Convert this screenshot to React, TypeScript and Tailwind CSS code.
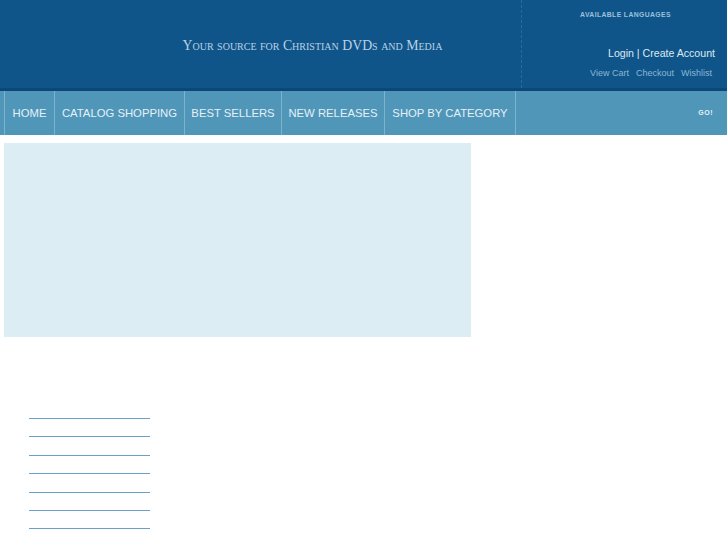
import React from "react";

export default function App() {
  const navItems = [
    { label: "HOME", w: "w-[50px]" },
    { label: "CATALOG SHOPPING", w: "w-[130px]" },
    { label: "BEST SELLERS", w: "w-[97px]" },
    { label: "NEW RELEASES", w: "w-[103px]" },
    { label: "SHOP BY CATEGORY", w: "w-[131px]" },
  ];
  return (
    <div className="w-[727px] min-h-[545px] bg-white" style={{ fontFamily: '"Liberation Sans", Arial, sans-serif' }}>
      <div className="h-[88px] bg-[#105589] flex">
        <div className="w-[521px] flex items-center justify-center pt-[4px] pl-[104px]">
          <span
            className="text-[#b8d2e6] text-[13.8px]"
            style={{ fontFamily: '"Liberation Serif", "Times New Roman", serif', fontVariant: "small-caps" }}
          >
            Your source for Christian DVDs and Media
          </span>
        </div>
        <div className="flex-1 border-l border-dashed border-[#2a6a9c] flex flex-col">
          <div className="pt-[10px] text-center text-[6.8px] font-bold tracking-[0.4px] text-[#9cc0dc] pl-[2px]">
            AVAILABLE LANGUAGES
          </div>
          <div className="mt-[27px] text-right pr-[12px] text-[10.6px] text-[#dce9f3] leading-[13px]">
            Login | Create Account
          </div>
          <div className="mt-[8px] text-right pr-[15px] text-[9px] text-[#8cb6d6] leading-[11px] flex justify-end gap-[7px]">
            <span>View Cart</span>
            <span>Checkout</span>
            <span>Wishlist</span>
          </div>
        </div>
      </div>
      <div className="h-[3px] bg-[#0c4776]" />
      <div className="h-[44px] bg-[#4f96b9] flex pl-[4px]">
        {navItems.map((n) => (
          <div
            key={n.label}
            className={`${n.w} h-full border-l border-[#7fb2cd] flex items-center justify-center text-[11.3px] text-[#e6f0f6]`}
          >
            {n.label}
          </div>
        ))}
        <div className="flex-1 h-full border-l border-[#7fb2cd] flex items-center justify-end pr-[14px] text-[7px] font-bold text-[#e6f0f6] tracking-[0.5px]">
          GO!
        </div>
      </div>
      <div className="pt-[8px] pl-[4px]">
        <div className="w-[467px] h-[194px] bg-[#ddedf4]" />
      </div>
      <div className="pl-[29px] pt-[81px] flex flex-col gap-[17.4px]">
        {Array.from({ length: 7 }).map((_, i) => (
          <div key={i} className="w-[121px] h-px bg-[#6a9fc8]" />
        ))}
      </div>
    </div>
  );
}
